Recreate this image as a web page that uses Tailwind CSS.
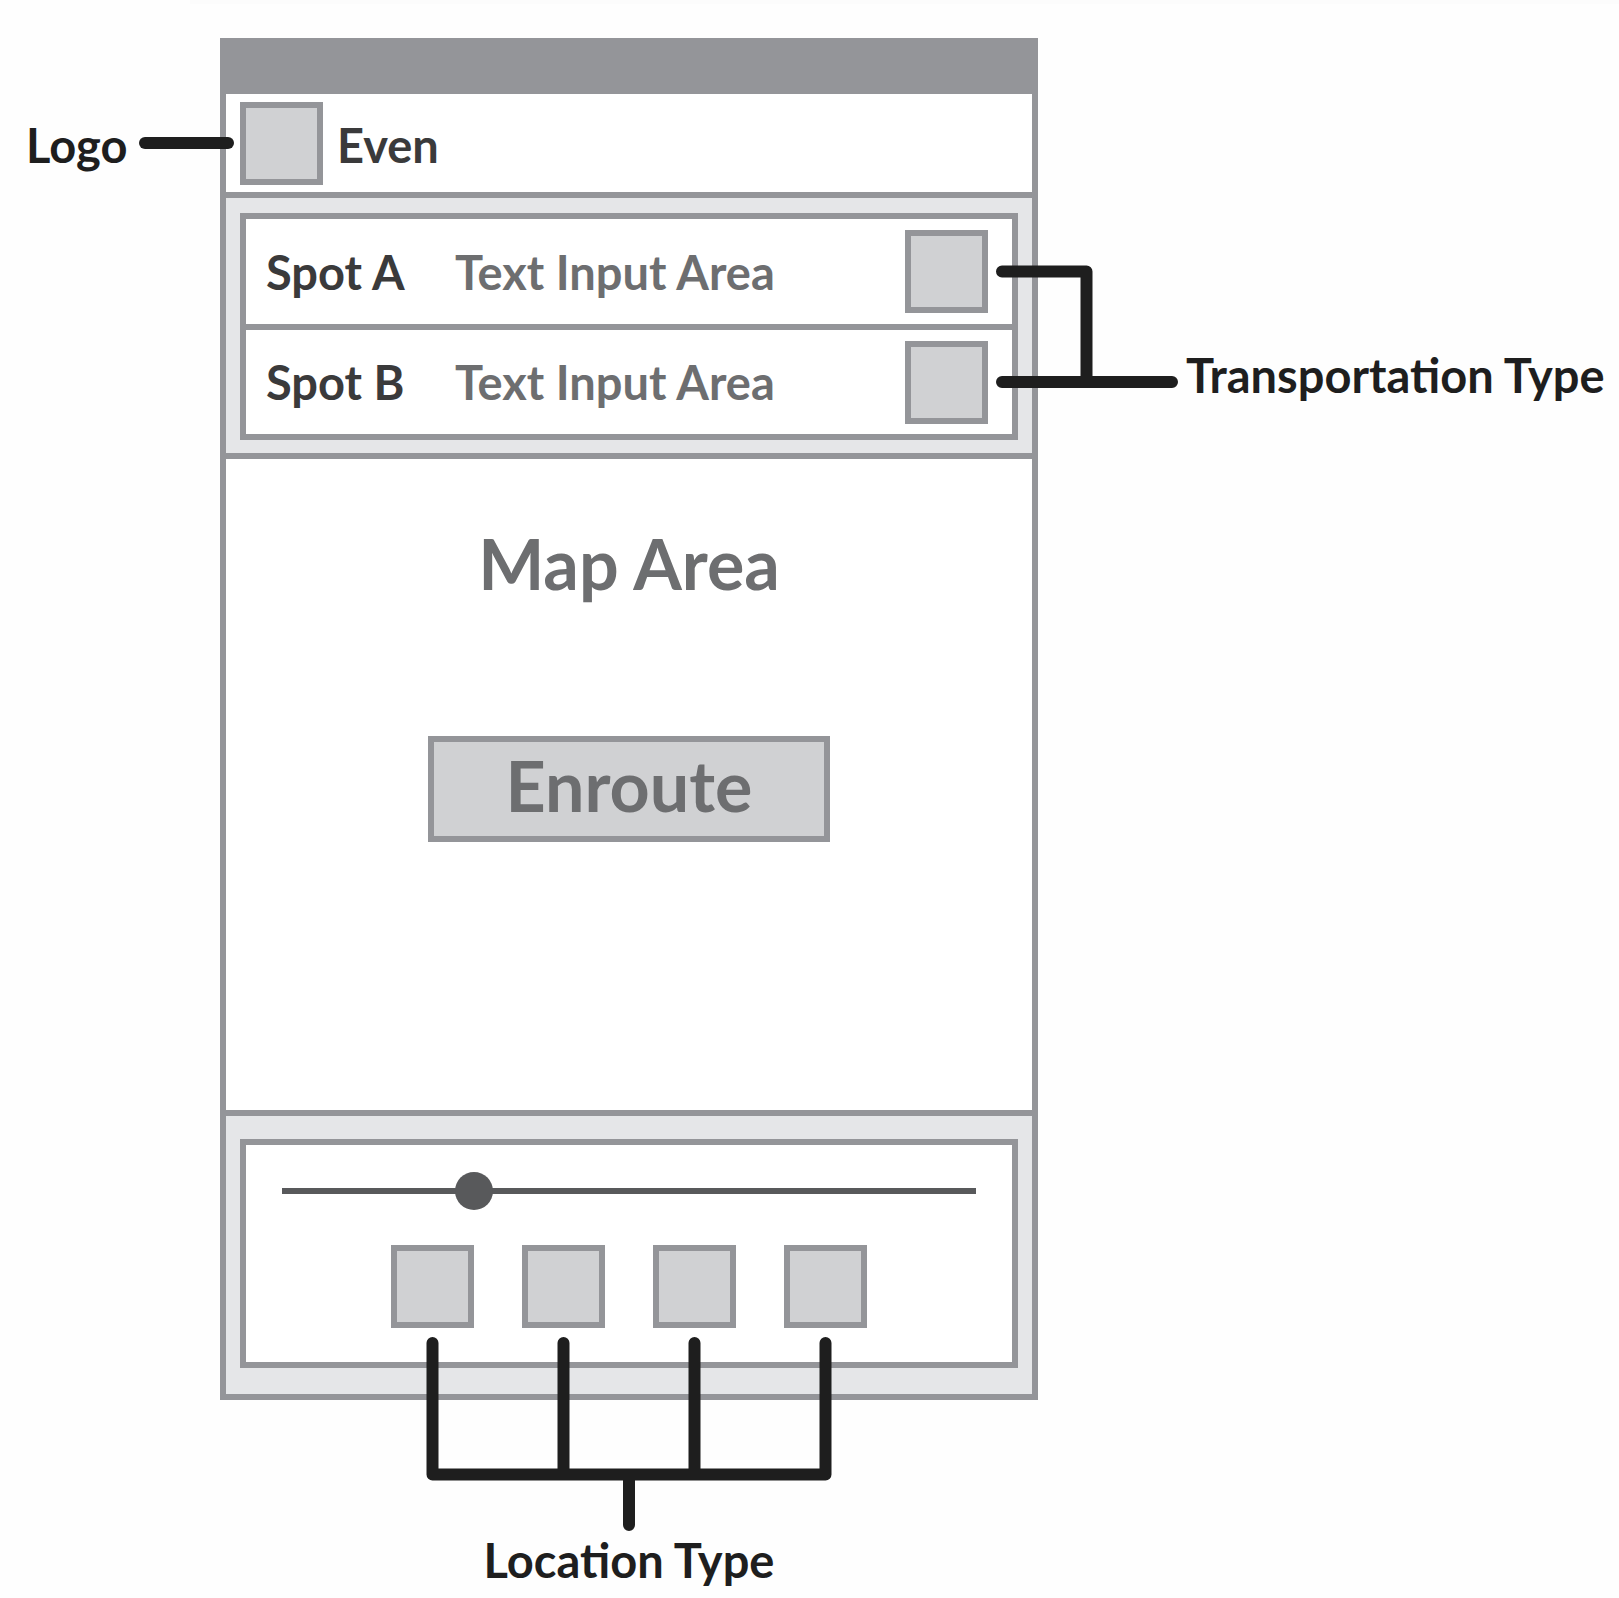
<!DOCTYPE html>
<html lang="en">
<head>
<meta charset="utf-8">
<meta name="viewport" content="width=device-width, initial-scale=1">
<title>Even – Wireframe</title>
<script src="https://cdn.jsdelivr.net/npm/@tailwindcss/browser@4"></script>
</head>
<body class="bg-[#fefefe] font-['Lato',sans-serif] text-[47px] leading-[58px] font-bold text-[#1e1e1e]">
<div class="ml-[190px] h-1 bg-[#fcfcfc]"></div>
<main class="grid grid-cols-[220fr_818fr_581fr] pt-[34px]">

  <!-- Left annotation -->
  <aside class="min-w-0 pt-[74px]">
    <div class="flex items-center gap-3 pl-[26px]">
      <span class="pt-1">Logo</span>
      <span class="relative z-10 -mr-[14px] h-3 flex-1 rounded-full bg-[#1e1e1e]"></span>
    </div>
  </aside>

  <!-- Phone -->
  <div class="min-w-0">
    <section class="border-6 border-[#949599] bg-white">
      <div class="h-[50px] bg-[#949599]"></div>
      <header class="flex h-[98px] items-center gap-[14px] px-[14px]">
        <div class="size-[83px] border-6 border-[#949599] bg-[#d0d1d3]"></div>
        <h1 class="pt-1 text-[#3a3a3b]">Even</h1>
      </header>

      <form class="border-y-6 border-[#949599] bg-[#e5e6e8] px-[14px] pt-[15px] pb-[13px]">
        <div class="divide-y-6 divide-[#949599] border-6 border-[#949599] bg-white">
          <div class="flex h-[111px] items-center pr-6 pl-5">
            <label for="spot-a" class="w-[189px] shrink-0 text-[#3a3a3b]">Spot A</label>
            <input id="spot-a" type="text" placeholder="Text Input Area" class="min-w-0 flex-1 text-[#6d6e70] outline-none placeholder:text-[#6d6e70]">
            <button type="button" aria-label="Transportation type for spot A" class="size-[83px] shrink-0 border-6 border-[#949599] bg-[#d0d1d3]"></button>
          </div>
          <div class="flex h-[104px] items-center pr-6 pl-5">
            <label for="spot-b" class="w-[189px] shrink-0 text-[#3a3a3b]">Spot B</label>
            <input id="spot-b" type="text" placeholder="Text Input Area" class="min-w-0 flex-1 text-[#6d6e70] outline-none placeholder:text-[#6d6e70]">
            <button type="button" aria-label="Transportation type for spot B" class="size-[83px] shrink-0 border-6 border-[#949599] bg-[#d0d1d3]"></button>
          </div>
        </div>
      </form>

      <div class="flex h-[651px] flex-col items-center pt-[61px] text-[70px] leading-[86px] text-[#6d6e70]">
        <h2>Map Area</h2>
        <button type="button" class="mt-[130px] flex h-[106px] w-[402px] justify-center border-6 border-[#949599] bg-[#d0d1d3]">Enroute</button>
      </div>

      <div class="border-t-6 border-[#949599] bg-[#e5e6e8] px-[14px] pt-[23px] pb-[26px]">
        <div class="h-[229px] border-6 border-[#949599] bg-white px-9 pt-[27px]">
          <input type="range" min="0" max="19" value="5" aria-label="Range" class="block h-[38px] w-full appearance-none bg-transparent [&::-webkit-slider-runnable-track]:h-[6px] [&::-webkit-slider-runnable-track]:bg-[#58595b] [&::-webkit-slider-thumb]:-mt-4 [&::-webkit-slider-thumb]:size-[38px] [&::-webkit-slider-thumb]:appearance-none [&::-webkit-slider-thumb]:rounded-full [&::-webkit-slider-thumb]:bg-[#58595b]">
          <div class="mt-[35px] flex justify-center gap-12">
            <button type="button" aria-label="Location type 1" class="size-[83px] border-6 border-[#949599] bg-[#d0d1d3]"></button>
            <button type="button" aria-label="Location type 2" class="size-[83px] border-6 border-[#949599] bg-[#d0d1d3]"></button>
            <button type="button" aria-label="Location type 3" class="size-[83px] border-6 border-[#949599] bg-[#d0d1d3]"></button>
            <button type="button" aria-label="Location type 4" class="size-[83px] border-6 border-[#949599] bg-[#d0d1d3]"></button>
          </div>
        </div>
      </div>
    </section>

    <!-- Bottom annotation -->
    <div class="relative -mt-[63px] flex flex-col items-center">
      <svg width="406" height="194" viewBox="0 0 406 194" fill="none" stroke="#1e1e1e" stroke-width="12" stroke-linecap="round" stroke-linejoin="round" aria-hidden="true">
        <path d="M6.500 6V137.500H399.500V6M137.500 6V137.500M268.500 6V137.500M203 137.500V188"/>
      </svg>
      <span>Location Type</span>
    </div>
  </div>

  <!-- Right annotation -->
  <aside class="min-w-0 pt-[227px]">
    <div class="flex items-end gap-2">
      <svg class="relative z-10 -ml-[42px] shrink-0" width="182" height="123" viewBox="0 0 182 123" fill="none" stroke="#1e1e1e" stroke-width="12" stroke-linecap="round" stroke-linejoin="round" aria-hidden="true">
        <path d="M6 6.500H90.500V117M6 117H176"/>
      </svg>
      <span class="-mb-4 whitespace-nowrap">Transportation Type</span>
    </div>
  </aside>
</main>
</body>
</html>
